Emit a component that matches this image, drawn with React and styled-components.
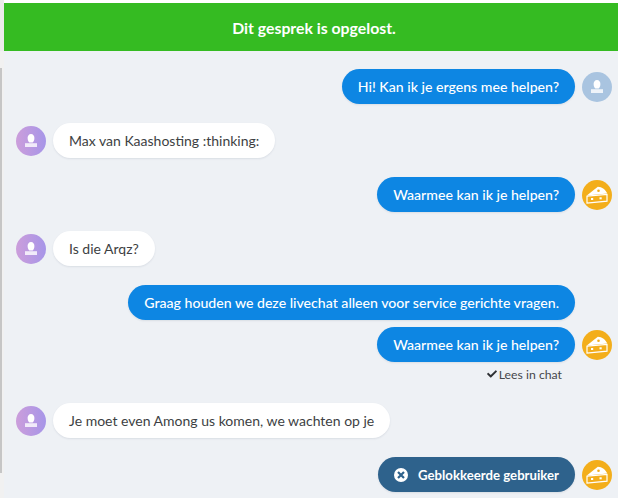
import React from 'react';
import styled, { createGlobalStyle } from 'styled-components';
import { FaCheck } from 'react-icons/fa';

const GlobalStyle = createGlobalStyle`
  html, body {
    margin: 0;
    padding: 0;
    background: #fff;
  }
  body {
    width: 618px;
    height: 498px;
    overflow: hidden;
    font-family: "Lato", "Open Sans", sans-serif;
  }
`;

const Page = styled.div`
  height: 498px;
  display: flex;
  overflow: hidden;
  background: #fff;
`;

const Gutter = styled.div`
  width: 4px;
  flex: none;
  display: flex;
  flex-direction: column;
`;

const GutterTop = styled.div`
  height: 51px;
  flex: none;
  background: #ebebeb;
`;

const GutterBottom = styled.div`
  flex: 1;
  padding-top: 17px;
  background: #f1f1f1;
`;

const GutterBar = styled.div`
  width: 1.5px;
  height: 405px;
  background: #c6c6c6;
`;

const Main = styled.div`
  flex: 1;
  min-width: 0;
  padding-top: 3px;
  display: flex;
  flex-direction: column;
`;

const Banner = styled.div`
  height: 48px;
  flex: none;
  padding-left: 6px;
  background: #35bb22;
  color: #fff;
  font-size: 15.8px;
  font-weight: 700;
  display: flex;
  align-items: center;
  justify-content: center;
`;

const Thread = styled.div`
  flex: 1;
  background: #eef1f5;
  padding: 18px 6px 0 12px;
  display: flex;
  flex-direction: column;
`;

const Row = styled.div`
  display: flex;
  align-items: center;
  justify-content: ${({ $mine }) => ($mine ? 'flex-end' : 'flex-start')};
  gap: 7px;
  margin-top: ${({ $gap }) => $gap}px;
`;

const Bubble = styled.div`
  height: 35px;
  padding: 0 16px;
  border-radius: 17.5px;
  display: flex;
  align-items: center;
  font-size: ${({ $kind }) => ($kind === 'blocked' ? 13.2 : $kind === 'mine' ? 14.12 : 14)}px;
  white-space: nowrap;
  box-shadow: 0 1px 2px rgba(40, 60, 90, 0.1);
  background: ${({ $kind }) =>
    $kind === 'mine' ? '#0d86e3' : $kind === 'blocked' ? '#2e628c' : '#fff'};
  color: ${({ $kind }) => ($kind === 'them' ? '#3d3f43' : '#fff')};
  font-weight: ${({ $kind }) => ($kind === 'blocked' ? 700 : $kind === 'mine' ? 500 : 400)};
`;

const Avatar = styled.div`
  width: 30px;
  height: 30px;
  flex: none;
  border-radius: 50%;
  display: flex;
  align-items: center;
  justify-content: center;
  background: ${({ $kind }) =>
    $kind === 'agent'
      ? '#a9c4e0'
      : $kind === 'cheese'
      ? '#f3ae1b'
      : 'linear-gradient(90deg, #cc9edb, #a695e8)'};
`;

const Spacer = styled.div`
  width: 30px;
  flex: none;
`;

const ReadNote = styled.div`
  display: flex;
  justify-content: flex-end;
  align-items: center;
  gap: 2px;
  margin-top: 5px;
  padding-right: 50px;
  height: 14px;
  font-size: 12.25px;
  color: #45474b;
`;

const BlockedIcon = styled.svg`
  width: 14px;
  height: 14px;
  margin-right: 10px;
  flex: none;
`;

const PersonIcon = () => (
  <svg width="12" height="13" viewBox="0 0 12 13">
    <path d="M6 0C3.9 0 2.6 1.7 2.6 4c0 2 .8 3.6 1.7 4.400h3.400C8.600 7.600 9.400 6 9.400 4 9.400 1.700 8.100 0 6 0z" fill="#fff" />
    <path d="M0 9.200h12V13H0z" fill="#fff" opacity="0.8" />
  </svg>
);

const CheeseIcon = () => (
  <svg width="22" height="18" viewBox="0 0 22 18">
    <path d="M.8 9.400 11.800.8c4.200.200 8 3 9.400 6.800z" fill="#fff" />
    <circle cx="12.500" cy="4.800" r="1.300" fill="#f3ae1b" />
    <path d="M1 10.200 21 8.400v6.800L1 17z" fill="none" stroke="#fff" strokeWidth="1.200" />
    <rect x="5" y="12" width="2.200" height="2" fill="#fff" />
    <rect x="13.500" y="11.300" width="2.200" height="2" fill="#fff" />
  </svg>
);

const TheirMessage = ({ gap, children }) => (
  <Row $gap={gap}>
    <Avatar $kind="user">
      <PersonIcon />
    </Avatar>
    <Bubble $kind="them">{children}</Bubble>
  </Row>
);

const App = () => (
  <Page>
    <GlobalStyle />
    <Gutter>
      <GutterTop />
      <GutterBottom>
        <GutterBar />
      </GutterBottom>
    </Gutter>
    <Main>
      <Banner>Dit gesprek is opgelost.</Banner>
      <Thread>
        <Row $mine $gap={0}>
          <Bubble $kind="mine">Hi! Kan ik je ergens mee helpen?</Bubble>
          <Avatar $kind="agent">
            <PersonIcon />
          </Avatar>
        </Row>
        <TheirMessage gap={19}>Max van Kaashosting :thinking:</TheirMessage>
        <Row $mine $gap={19}>
          <Bubble $kind="mine">Waarmee kan ik je helpen?</Bubble>
          <Avatar $kind="cheese">
            <CheeseIcon />
          </Avatar>
        </Row>
        <TheirMessage gap={19}>Is die Arqz?</TheirMessage>
        <Row $mine $gap={19}>
          <Bubble $kind="mine">Graag houden we deze livechat alleen voor service gerichte vragen.</Bubble>
          <Spacer />
        </Row>
        <Row $mine $gap={7}>
          <Bubble $kind="mine">Waarmee kan ik je helpen?</Bubble>
          <Avatar $kind="cheese">
            <CheeseIcon />
          </Avatar>
        </Row>
        <ReadNote>
          <FaCheck size={10} color="#2e3033" />
          Lees in chat
        </ReadNote>
        <TheirMessage gap={22}>Je moet even Among us komen, we wachten op je</TheirMessage>
        <Row $mine $gap={19}>
          <Bubble $kind="blocked">
            <BlockedIcon viewBox="0 0 14 14">
              <circle cx="7" cy="7" r="7" fill="#fff" />
              <path d="M4 4l6 6M10 4l-6 6" stroke="#2e628c" strokeWidth="2.200" />
            </BlockedIcon>
            Geblokkeerde gebruiker
          </Bubble>
          <Avatar $kind="cheese">
            <CheeseIcon />
          </Avatar>
        </Row>
      </Thread>
    </Main>
  </Page>
);

export default App;
